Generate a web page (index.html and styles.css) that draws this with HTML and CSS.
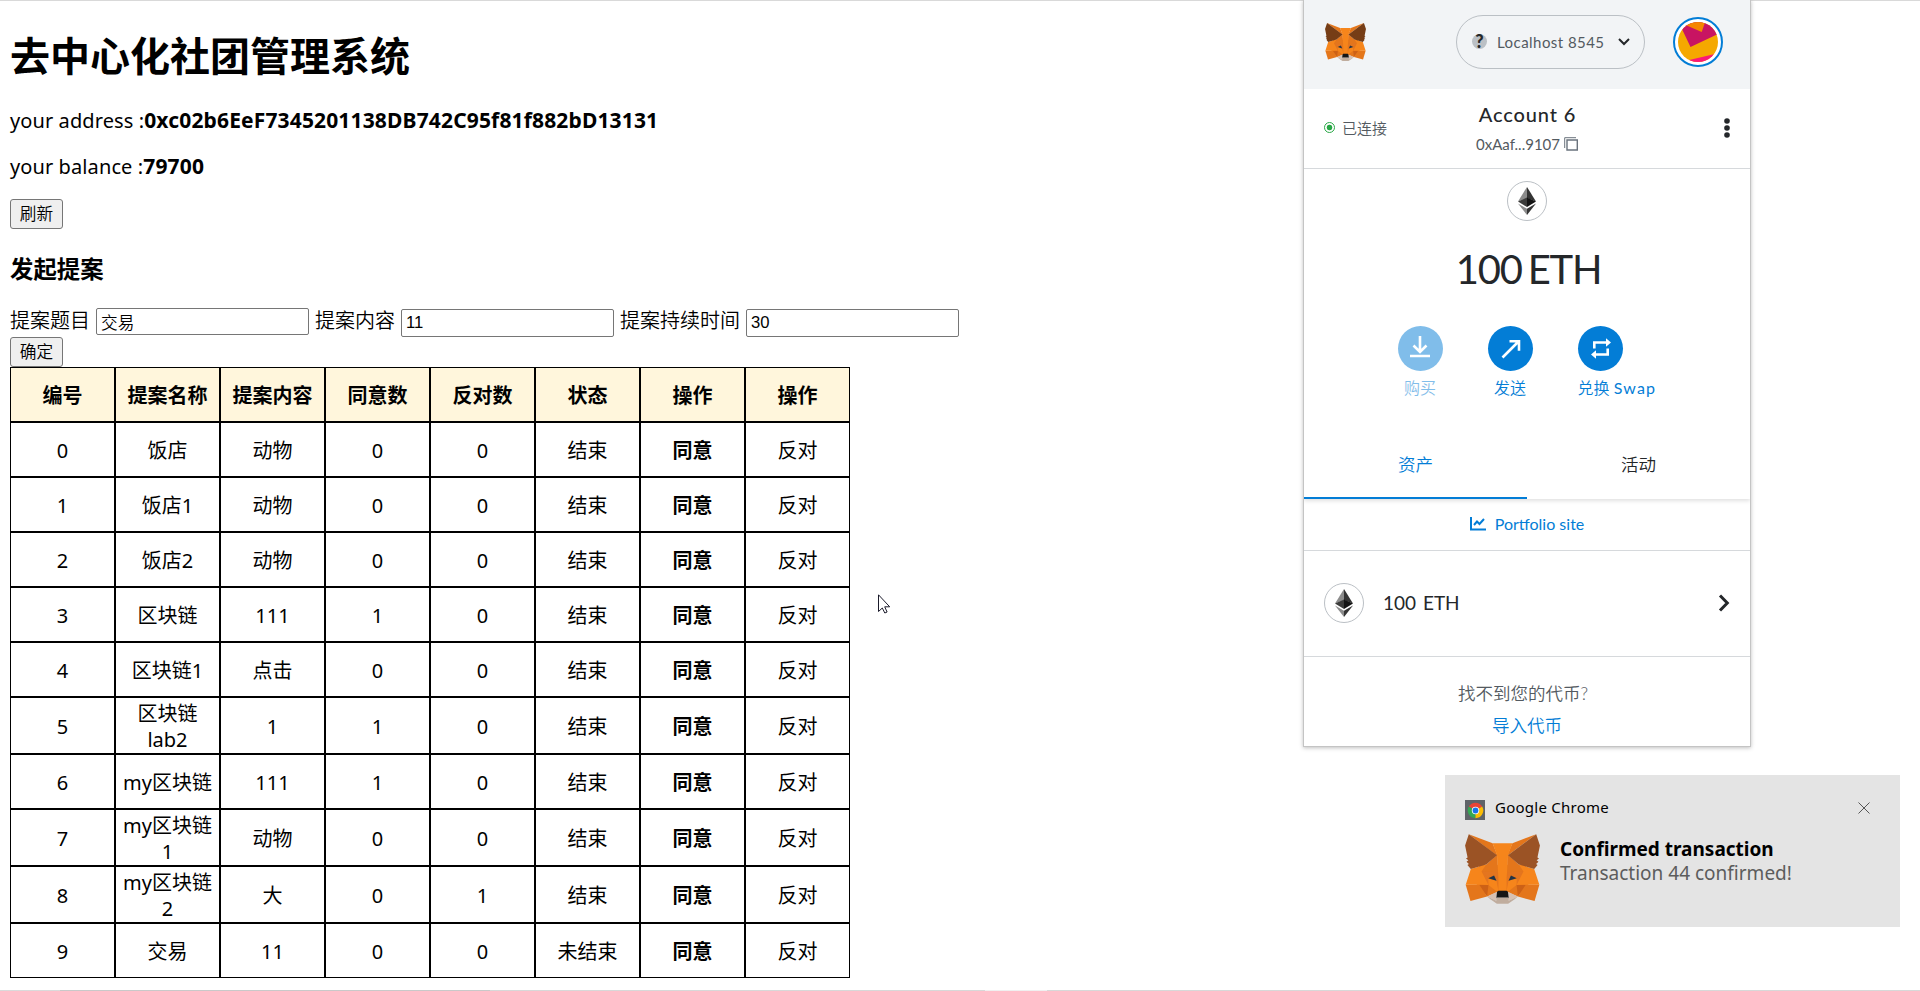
FILE: index.html
```html
<!DOCTYPE html>
<html lang="zh-CN">
<head>
<meta charset="utf-8">
<title>去中心化社团管理系统</title>
<link rel="stylesheet" href="styles.css">
</head>
<body>
<svg class="defs" width="0" height="0">
  <symbol id="fox" viewBox="31.5 35.5 255.5 236.5">
    <path fill="#e4761b" d="M80 140h158l10 66-36 41-34-14h-38l-33 14-36-41z"/>
    <g fill="#e4761b"><path d="M274.1 35.5l-99.5 73.9L193 65.8z"/><path d="M44.4 35.5l98.7 74.6-17.5-44.3z"/><path d="M238.3 206.8l-26.5 40.6 56.7 15.6 16.3-55.3z"/><path d="M33.9 207.7L50.1 263l56.7-15.6-26.5-40.6z"/><path d="M103.6 138.2l-15.8 23.9 56.3 2.5-2-60.5z"/><path d="M214.9 138.2l-39-34.8-1.3 61.2 56.2-2.5z"/><path d="M106.8 247.4l33.8-16.5-29.2-22.8z"/><path d="M177.9 230.9l33.9 16.5-4.7-39.3z"/></g>
    <g fill="#d7c1b3"><path d="M211.8 247.4l-33.9-16.5 2.7 22.1-.3 9.3z"/><path d="M106.8 247.4l31.5 14.9-.2-9.3 2.5-22.1z"/></g>
    <g fill="#cd6116"><path d="M106.8 247.4l4.8-40.6-31.3.9z"/><path d="M207 206.8l4.8 40.6 26.5-39.7z"/></g>
    <g fill="#e4751f"><path d="M230.8 162.1l-56.2 2.5 5.2 28.9 8.3-17.4 20 9.1z"/><path d="M110.6 185.2l20-9.1 8.2 17.4 5.3-28.9-56.3-2.5z"/></g>
    <g fill="#e4751f"><path d="M87.8 162.1l23.6 46-.8-22.9z"/><path d="M208.1 185.2l-1 22.9 23.7-46z"/><path d="M144.1 164.6l-5.3 28.9 6.6 34.1 1.5-44.9z"/><path d="M174.6 164.6l-2.7 18 1.2 45 6.7-34.1z"/></g>
    <g fill="#f6851b"><path d="M179.8 193.5l-6.7 34.1 4.8 3.3 29.2-22.8 1-22.9z"/><path d="M110.6 185.2l.8 22.9 29.2 22.8 4.8-3.3-6.6-34.1z"/><path d="M267.2 153.5l-52.3-15.3 15.9 23.9-23.7 46 31.2-.4h46.5z"/><path d="M103.6 138.2l-52.3 15.3-17.4 54.2h46.4l31.1.4-23.6-46z"/><path d="M174.6 164.6l3.3-57.7 15.2-41.1h-67.5l15 41.1 3.5 57.7 1.2 18.2.1 44.8h27.7l.2-44.8z"/></g>
    <path fill="#c0ad9e" d="M180.3 262.3l.3-9.3-2.5-2.2h-37.7l-2.3 2.2.2 9.3-31.5-14.9 11 9 22.3 15.5h38.3l22.4-15.5 11-9z"/>
    <path fill="#161616" d="M177.9 230.9l-4.8-3.3h-27.7l-4.8 3.3-2.5 22.1 2.3-2.2h37.7l2.5 2.2z"/>
    <g fill="#233447"><path d="M138.8 193.5l-28.2-8.3 19.9-9.1z"/><path d="M179.7 193.5l8.3-17.4 20 9.1z"/></g>
    <g fill="currentColor"><path d="M278.3 114.2l8.5-40.8-12.7-37.9-96.2 71.4 37 31.3 52.3 15.3 11.6-13.5-5-3.6 8-7.3-6.2-4.8 8-6.1z"/><path d="M31.8 73.4l8.5 40.8-5.4 4 8 6.1-6.1 4.8 8 7.3-5 3.6 11.5 13.5 52.3-15.3 37-31.3-96.2-71.4z"/></g>
  </symbol>
  <symbol id="eth" viewBox="0 0 18 28">
    <path fill="#8c8c8c" d="M9 0L0 14.5 9 11z"/><path fill="#343434" d="M9 0l9 14.5L9 11z"/>
    <path fill="#3c3c3b" d="M0 14.5L9 10.5V20z"/><path fill="#141414" d="M18 14.5L9 10.5V20z"/>
    <path fill="#8c8c8c" d="M0 16.5l9 5.3V28z"/><path fill="#343434" d="M18 16.5l-9 5.3V28z"/>
  </symbol>
</svg>

<main class="page">
  <h1>去中心化社团管理系统</h1>
  <p class="info">your address :<b class="address">0xc02b6EeF7345201138DB742C95f81f882bD13131</b></p>
  <p class="info">your balance :<b class="balance">79700</b></p>
  <button class="btn">刷新</button>
  <h3>发起提案</h3>
  <div class="form">
    <label>提案题目</label><input class="cjk" value="交易">
    <label>提案内容</label><input value="11">
    <label>提案持续时间</label><input value="30">
  </div>
  <button class="btn">确定</button>
  <table>
    <tr><th>编号</th><th>提案名称</th><th>提案内容</th><th>同意数</th><th>反对数</th><th>状态</th><th>操作</th><th>操作</th></tr>
    <tr><td>0</td><td>饭店</td><td>动物</td><td>0</td><td>0</td><td>结束</td><td><b>同意</b></td><td>反对</td></tr>
    <tr><td>1</td><td>饭店1</td><td>动物</td><td>0</td><td>0</td><td>结束</td><td><b>同意</b></td><td>反对</td></tr>
    <tr><td>2</td><td>饭店2</td><td>动物</td><td>0</td><td>0</td><td>结束</td><td><b>同意</b></td><td>反对</td></tr>
    <tr><td>3</td><td>区块链</td><td>111</td><td>1</td><td>0</td><td>结束</td><td><b>同意</b></td><td>反对</td></tr>
    <tr><td>4</td><td>区块链1</td><td>点击</td><td>0</td><td>0</td><td>结束</td><td><b>同意</b></td><td>反对</td></tr>
    <tr class="tall"><td>5</td><td>区块链<br>lab2</td><td>1</td><td>1</td><td>0</td><td>结束</td><td><b>同意</b></td><td>反对</td></tr>
    <tr><td>6</td><td>my区块链</td><td>111</td><td>1</td><td>0</td><td>结束</td><td><b>同意</b></td><td>反对</td></tr>
    <tr class="tall"><td>7</td><td>my区块链<br>1</td><td>动物</td><td>0</td><td>0</td><td>结束</td><td><b>同意</b></td><td>反对</td></tr>
    <tr class="tall"><td>8</td><td>my区块链<br>2</td><td>大</td><td>0</td><td>1</td><td>结束</td><td><b>同意</b></td><td>反对</td></tr>
    <tr><td>9</td><td>交易</td><td>11</td><td>0</td><td>0</td><td>未结束</td><td><b>同意</b></td><td>反对</td></tr>
  </table>
</main>

<aside class="wallet">
  <header class="w-head">
    <svg class="w-fox"><use href="#fox"/></svg>
    <div class="network">
      <span class="q">?</span><span class="net-name">Localhost 8545</span>
      <svg width="12" height="8" viewBox="0 0 12 8"><path d="M1 1l5 5 5-5" fill="none" stroke="#24272a" stroke-width="2"/></svg>
    </div>
    <svg class="avatar" viewBox="0 0 50 50">
      <clipPath id="c"><circle cx="25" cy="25" r="20"/></clipPath>
      <circle cx="25" cy="25" r="24" fill="#fff" stroke="#037dd6" stroke-width="2"/>
      <g clip-path="url(#c)"><path fill="#f5a800" d="M0 0h50v50H0z"/><path fill="#c81462" d="M8 10L17.500 30 46 16.500V0H0z"/><path fill="#f58700" d="M9 6.500L28.700 15 32.500 4H12z"/><path fill="#fb1877" d="M12 44l34-8v14H12z"/></g>
    </svg>
  </header>
  <section class="account">
    <div class="conn"><i></i>已连接</div>
    <div class="acct">
      <div class="acct-name">Account 6</div>
      <div class="acct-addr">0xAaf...9107<svg width="14" height="14" viewBox="0 0 14 14" fill="none" stroke="#6a737d"><path d="M.700 11V.700H12"/><path d="M3 3h10.300v10H3z" stroke-width="1.400"/></svg></div>
    </div>
    <svg class="dots" width="6" height="20" viewBox="0 0 6 20" fill="#24272a"><circle cx="3" cy="3" r="2.800"/><circle cx="3" cy="10" r="2.800"/><circle cx="3" cy="17" r="2.800"/></svg>
  </section>
  <section class="overview">
    <div class="token"><svg><use href="#eth"/></svg></div>
    <div class="amount">100 ETH</div>
    <div class="actions">
      <div class="action off"><span class="round"><svg viewBox="0 0 45 45"><path d="M22 10v15M15.500 19.500l6.500 6.500 6.500-6.500M12 30h20"/></svg></span><span>购买</span></div>
      <div class="action"><span class="round"><svg viewBox="0 0 45 45"><path d="M14.500 31.500L30.500 15.500M21.500 15.200h9.500v9.500"/></svg></span><span>发送</span></div>
      <div class="action swap"><span class="round"><svg viewBox="0 0 45 45"><path d="M16.300 22.500v-6h12M29.700 22.500v6h-12"/><path class="fill" d="M28 12.300l5 4.200-5 4.200zM18 24.300l-5 4.200 5 4.200z"/></svg></span><span>兑换 <em>Swap</em></span></div>
    </div>
  </section>
  <nav class="tabs"><span class="on">资产</span><span>活动</span></nav>
  <div class="portfolio"><svg width="16" height="14" viewBox="0 0 16 14" fill="none" stroke="#037dd6" stroke-width="2"><path d="M1 0v12.500h15M4 8l3-3.500 2.500 2.500L14 2"/></svg><span>Portfolio site</span></div>
  <div class="asset">
    <div class="token"><svg><use href="#eth"/></svg></div><span>100 ETH</span>
    <svg class="chev" width="12" height="18" viewBox="0 0 12 18"><path d="M2 1.500L9.300 9 2 16.500" fill="none" stroke="#24272a" stroke-width="3"/></svg>
  </div>
  <div class="missing"><span class="ask">找不到您的代币?</span><span class="link">导入代币</span></div>
</aside>

<div class="toast">
  <div class="t-head">
    <svg width="20" height="20" viewBox="0 0 20 20"><path fill="#5f6368" d="M0 0h20v20H0z"/><path fill="#ea4335" d="M10.500 10.500L3.800 6.600a7.700 7.700 0 0 1 13.400 0z"/><path fill="#34a853" d="M10.500 10.500v7.700A7.700 7.700 0 0 1 3.800 6.600z"/><path fill="#fbbc04" d="M10.500 10.500l6.700-3.900a7.700 7.700 0 0 1-6.700 11.600z"/><circle cx="10.500" cy="10.500" r="3.700" fill="#fff"/><circle cx="10.500" cy="10.500" r="2.900" fill="#1a73e8"/></svg>
    <span>Google Chrome</span>
    <svg class="close" width="12" height="12" viewBox="0 0 12 12"><path d="M.500.500l11 11M11.500.500l-11 11" stroke="#555" fill="none"/></svg>
  </div>
  <div class="t-body">
    <svg class="t-fox"><use href="#fox"/></svg>
    <div><div class="t-title">Confirmed transaction</div><div class="t-text">Transaction 44 confirmed!</div></div>
  </div>
</div>

<svg class="cursor" width="13" height="20" viewBox="0 0 13 20"><path d="M.5.8v16.700l3.800-3.500 2.500 5 2.300-1-2.400-5.200h5z" fill="#fff" stroke="#1b1b2b"/></svg>
</body>
</html>
```
FILE: styles.css
```css
* { box-sizing: border-box; }
body {
  margin: 0;
  width: 1920px;
  height: 991px;
  position: relative;
  overflow: hidden;
  background:
    linear-gradient(#d9d9d9, #d9d9d9) 0 0 / 100% 1px no-repeat,
    linear-gradient(90deg, #dadada 60px, #c9c9c9 60px 490px, #d8d8d8 490px 985px, #f0f0f0 985px 1047px, #d8d8d8 1047px) 0 100% / 100% 1px no-repeat,
    #fff;
  color: #000;
  font-family: "Noto Sans", "Noto Sans CJK SC", sans-serif;
  font-size: 20px;
}
.defs { position: absolute; }
.page { padding: 26px 10px 0; display: flex; flex-direction: column; align-items: flex-start; }
h1 { margin: 0; font-size: 40px; line-height: 56px; font-family: "Noto Sans CJK SC", sans-serif; }
.info { margin: 0; height: 26px; line-height: 26px; white-space: nowrap; letter-spacing: .1px; }
.info b { font-size: 21px; letter-spacing: .15px; }
h1 + .info { margin-top: 25px; }
.info + .info { margin-top: 20px; }
.btn {
  width: 53px; height: 30px; padding: 0 0 2px;
  border: 1px solid #767676; border-radius: 3px; background: #efefef; color: #000;
  font: 350 16.67px/26px "Noto Sans CJK SC", sans-serif;
}
.info + .btn { margin-top: 20px; }
h3 { margin: 22px 0 0; font-size: 23.4px; line-height: 34px; font-family: "Noto Sans CJK SC", sans-serif; }
.form { margin-top: 22px; height: 30px; display: flex; align-items: flex-start; }
.form label { margin-right: 6px; line-height: 26px; font-family: "Noto Sans CJK SC", sans-serif; font-weight: 350; }
.form input {
  width: 213px; height: 28px; margin: 2px 6px 0 0; padding: 1px 4px;
  border: 1px solid #767676; border-radius: 2px; font: 16.67px "Liberation Sans", sans-serif; color: #000;
}
.form .cjk { height: 27px; margin-top: 1px; font: 350 16.67px "Noto Sans CJK SC", sans-serif; }
table { width: 840px; table-layout: fixed; border-collapse: separate; border-spacing: 0; border: 0; }
th, td {
  height: 55px; padding: 2px 0 0; border: 1px solid #000;
  text-align: center; vertical-align: middle; line-height: 26px; font-weight: 400;
  white-space: nowrap;
}
th { background: #fff6dc; font-weight: 700; }
td b { font-weight: 700; }
.tall td { height: 57px; }

.wallet {
  position: absolute; left: 1303px; top: 0; width: 448px; height: 747px;
  border: 1px solid #c4c4c4; border-top: 0; background: #fff;
  box-shadow: 0 1px 4px rgba(0,0,0,.25);
  font-family: Lato, "Noto Sans CJK SC", sans-serif; color: #24272a;
  display: flex; flex-direction: column;
}
.w-head { height: 89px; flex: none; background: #f2f4f6; display: flex; align-items: center; padding: 0 27px 5px 21px; }
.w-fox { width: 41px; height: 38px; color: #763d16; }
.network {
  width: 189px; height: 54px; margin-left: 90px; border: 1px solid #bbc0c5; border-radius: 27px;
  display: flex; align-items: center; padding: 0 0 1px 15px; font-size: 15px; color: #535a61;
}
.q { width: 15px; height: 15px; border-radius: 50%; background: #bbc0c5; color: #24272a; font: 900 18px/15px Lato, sans-serif; text-align: center; }
.net-name { width: 107px; margin: 0 14px 0 10px; white-space: nowrap; letter-spacing: .45px; }
.avatar { width: 50px; height: 50px; margin-left: 28px; }
.account {
  height: 80px; flex: none; border-bottom: 1px solid #d6d9dc; padding: 0 20px 2px;
  display: grid; grid-template-columns: 1fr 150px 1fr; align-items: center;
}
.conn { display: flex; align-items: center; font-size: 15px; font-weight: 350; color: #535a61; line-height: 20px; }
.conn i { width: 11px; height: 11px; border: 1px solid #28a745; border-radius: 50%; margin-right: 7px; background: radial-gradient(#28a745 0 2.5px, #fff 3.2px); }
.acct { text-align: center; margin-top: -2px; }
.acct-name { font-size: 20px; line-height: 28px; font-weight: 500; letter-spacing: .9px; margin-left: 1px; }
.acct-addr { font-size: 15px; line-height: 20px; margin-top: 6px; color: #535a61; display: flex; justify-content: center; align-items: center; gap: 4px; }
.dots { justify-self: end; }
.overview { height: 262px; flex: none; display: flex; flex-direction: column; align-items: center; padding-top: 12px; }
.token { width: 40px; height: 40px; flex: none; border: 1px solid #bbc0c5; border-radius: 50%; display: flex; align-items: center; justify-content: center; }
.token svg { width: 18px; height: 28px; }
.amount { margin: 23px 0 0 3px; font-size: 40px; line-height: 50px; white-space: nowrap; letter-spacing: -1.2px; word-spacing: -3px; }
.actions { width: 270px; margin: 32px 0 0 11px; display: flex; gap: 45px; }
.action { width: 45px; display: flex; flex-direction: column; align-items: center; font-size: 16px; line-height: 22px; font-weight: 350; color: #037dd6; gap: 6px; white-space: nowrap; }
.action em { font-style: normal; font-weight: 400; letter-spacing: 1.1px; }
.swap { width: 80px; align-items: flex-start; }
.off { opacity: .5; }
.round { width: 45px; height: 45px; border-radius: 50%; background: #037dd6; }
.round svg { display: block; width: 45px; height: 45px; fill: none; stroke: #fff; stroke-width: 2.6; }
.round .fill { fill: #fff; stroke: none; }
.tabs { height: 68px; flex: none; display: grid; grid-template-columns: 1fr 1fr; text-align: center; font-size: 17.5px; line-height: 64px; font-weight: 350; box-shadow: 0 2px 4px rgba(0,0,0,.12); clip-path: inset(0 0 -8px 0); }
.tabs span { padding-top: 2px; }
.tabs .on { color: #037dd6; border-bottom: 2px solid #037dd6; }
.portfolio { height: 52px; flex: none; border-bottom: 1px solid #d6d9dc; display: flex; align-items: center; justify-content: center; gap: 9px; padding-bottom: 2px; font-size: 16px; color: #037dd6; }
.asset { height: 106px; flex: none; border-bottom: 1px solid #d6d9dc; display: flex; align-items: center; padding: 0 20px 2px; font-size: 19px; }
.asset span { margin-left: 19px; word-spacing: 2px; }
.chev { margin-left: auto; }
.missing { display: flex; flex-direction: column; align-items: center; padding-top: 21px; font-size: 17.5px; line-height: 32px; font-weight: 350; color: #535a61; }
.ask { margin-right: 8px; }
.link { color: #037dd6; }

.toast { position: absolute; left: 1445px; top: 775px; width: 455px; height: 152px; background: #e4e4e4; padding: 21px 30px 0 20px; }
.t-head { display: flex; align-items: center; height: 24px; font-size: 15px; }
.t-head span { margin-left: 10px; padding-bottom: 2px; letter-spacing: .25px; }
.close { margin-left: auto; }
.t-head > svg:first-child { margin-top: 3px; }
.t-body { display: flex; margin-top: 13px; }
.t-fox { width: 75px; height: 72px; color: #9b5325; }
.t-body > div { margin: 4px 0 0 20px; line-height: 24px; white-space: nowrap; }
.t-title { font-weight: 700; font-size: 19px; }
.t-text { font-size: 19px; color: #5c5c5c; }
.cursor { position: absolute; left: 878px; top: 594px; }
```
